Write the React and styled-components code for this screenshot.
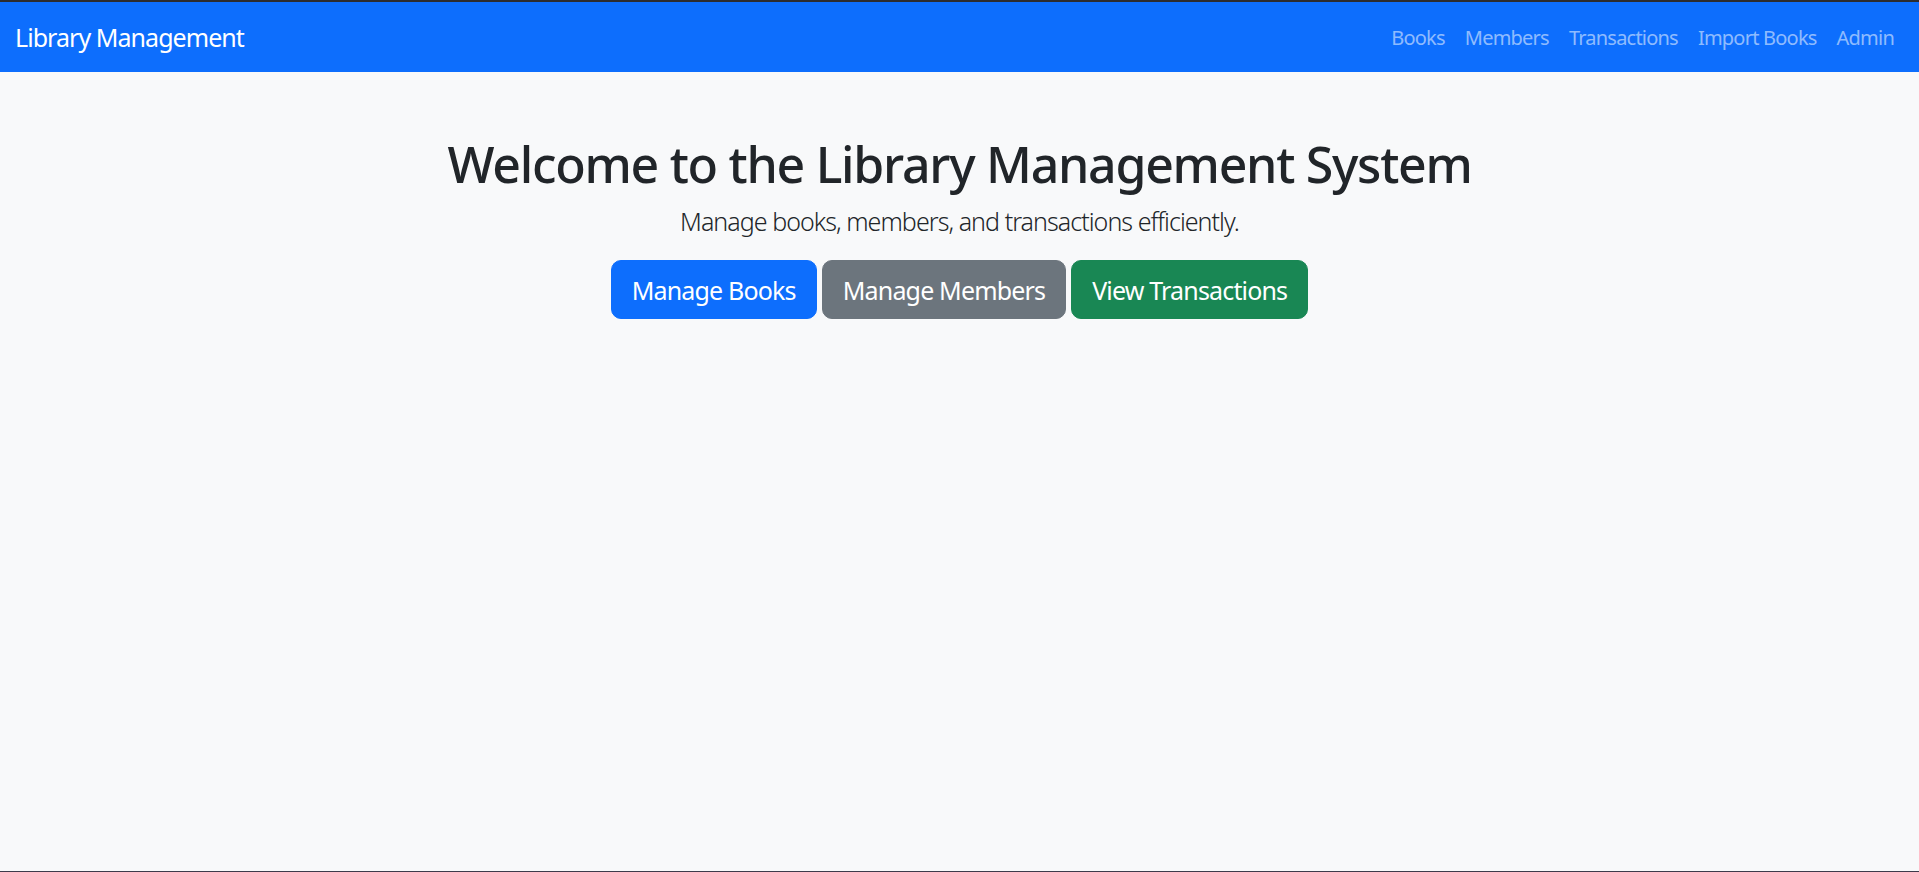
import React from "react";
import styled, { createGlobalStyle } from "styled-components";

const Global = createGlobalStyle`
  html, body { margin: 0; padding: 0; }
  body {
    background: #f8f9fa;
    font-family: "Noto Sans", "Open Sans", sans-serif;
    color: #212529;
  }
  * { box-sizing: border-box; }
`;

const Page = styled.div`
  height: 872px;
  display: flex;
  flex-direction: column;
  background: #f8f9fa;
  border-top: 2px solid #2c2c2e;
  border-bottom: 1px solid #3d3a4b;
`;

const Navbar = styled.nav`
  height: 70px;
  flex: none;
  background: #0d6efd;
  display: flex;
  align-items: center;
  justify-content: space-between;
  padding: 10px 15px;
`;

const Brand = styled.a`
  color: #fff;
  font-size: 25px;
  line-height: 37.5px;
  letter-spacing: -0.95px;
  padding: 7px 0 5px;
  text-decoration: none;
`;

const NavList = styled.ul`
  display: flex;
  list-style: none;
  margin: 0;
  padding: 0;
`;

const NavLink = styled.a`
  display: block;
  color: rgba(255, 255, 255, 0.55);
  font-size: 20px;
  line-height: 30px;
  letter-spacing: -0.78px;
  padding: 11px 10px 9px;
  text-decoration: none;
`;

const Hero = styled.main`
  margin-top: 60px;
  display: flex;
  flex-direction: column;
  align-items: center;
  text-align: center;
`;

const Title = styled.h1`
  margin: 0 0 8px;
  padding-top: 2px;
  font-size: 50px;
  line-height: 60px;
  font-weight: 500;
  letter-spacing: -1.27px;
  color: #212529;
`;

const Lead = styled.p`
  margin: 0 0 19px;
  padding-top: 1px;
  font-size: 25px;
  line-height: 37.5px;
  font-weight: 300;
  letter-spacing: -0.95px;
  color: #212529;
`;

const ButtonRow = styled.div`
  display: flex;
  gap: 5px;
  justify-content: center;
`;

const COLORS = {
  primary: "#0d6efd",
  secondary: "#6c757d",
  success: "#198754",
};

const Button = styled.a`
  display: inline-block;
  background: ${(p) => COLORS[p.$variant]};
  border: 1.25px solid ${(p) => COLORS[p.$variant]};
  color: #fff;
  font-size: 25px;
  line-height: 37.5px;
  letter-spacing: -0.83px;
  padding: 11px 20px 9px;
  border-radius: 10px;
  text-decoration: none;
`;

export default function App() {
  return (
    <>
      <Global />
      <Page>
        <Navbar>
          <Brand href="#">Library Management</Brand>
          <NavList>
            {["Books", "Members", "Transactions", "Import Books", "Admin"].map((l) => (
              <li key={l}>
                <NavLink href="#">{l}</NavLink>
              </li>
            ))}
          </NavList>
        </Navbar>
        <Hero>
          <Title>Welcome to the Library Management System</Title>
          <Lead>Manage books, members, and transactions efficiently.</Lead>
          <ButtonRow>
            <Button $variant="primary" href="#">Manage Books</Button>
            <Button $variant="secondary" href="#">Manage Members</Button>
            <Button $variant="success" href="#">View Transactions</Button>
          </ButtonRow>
        </Hero>
      </Page>
    </>
  );
}
